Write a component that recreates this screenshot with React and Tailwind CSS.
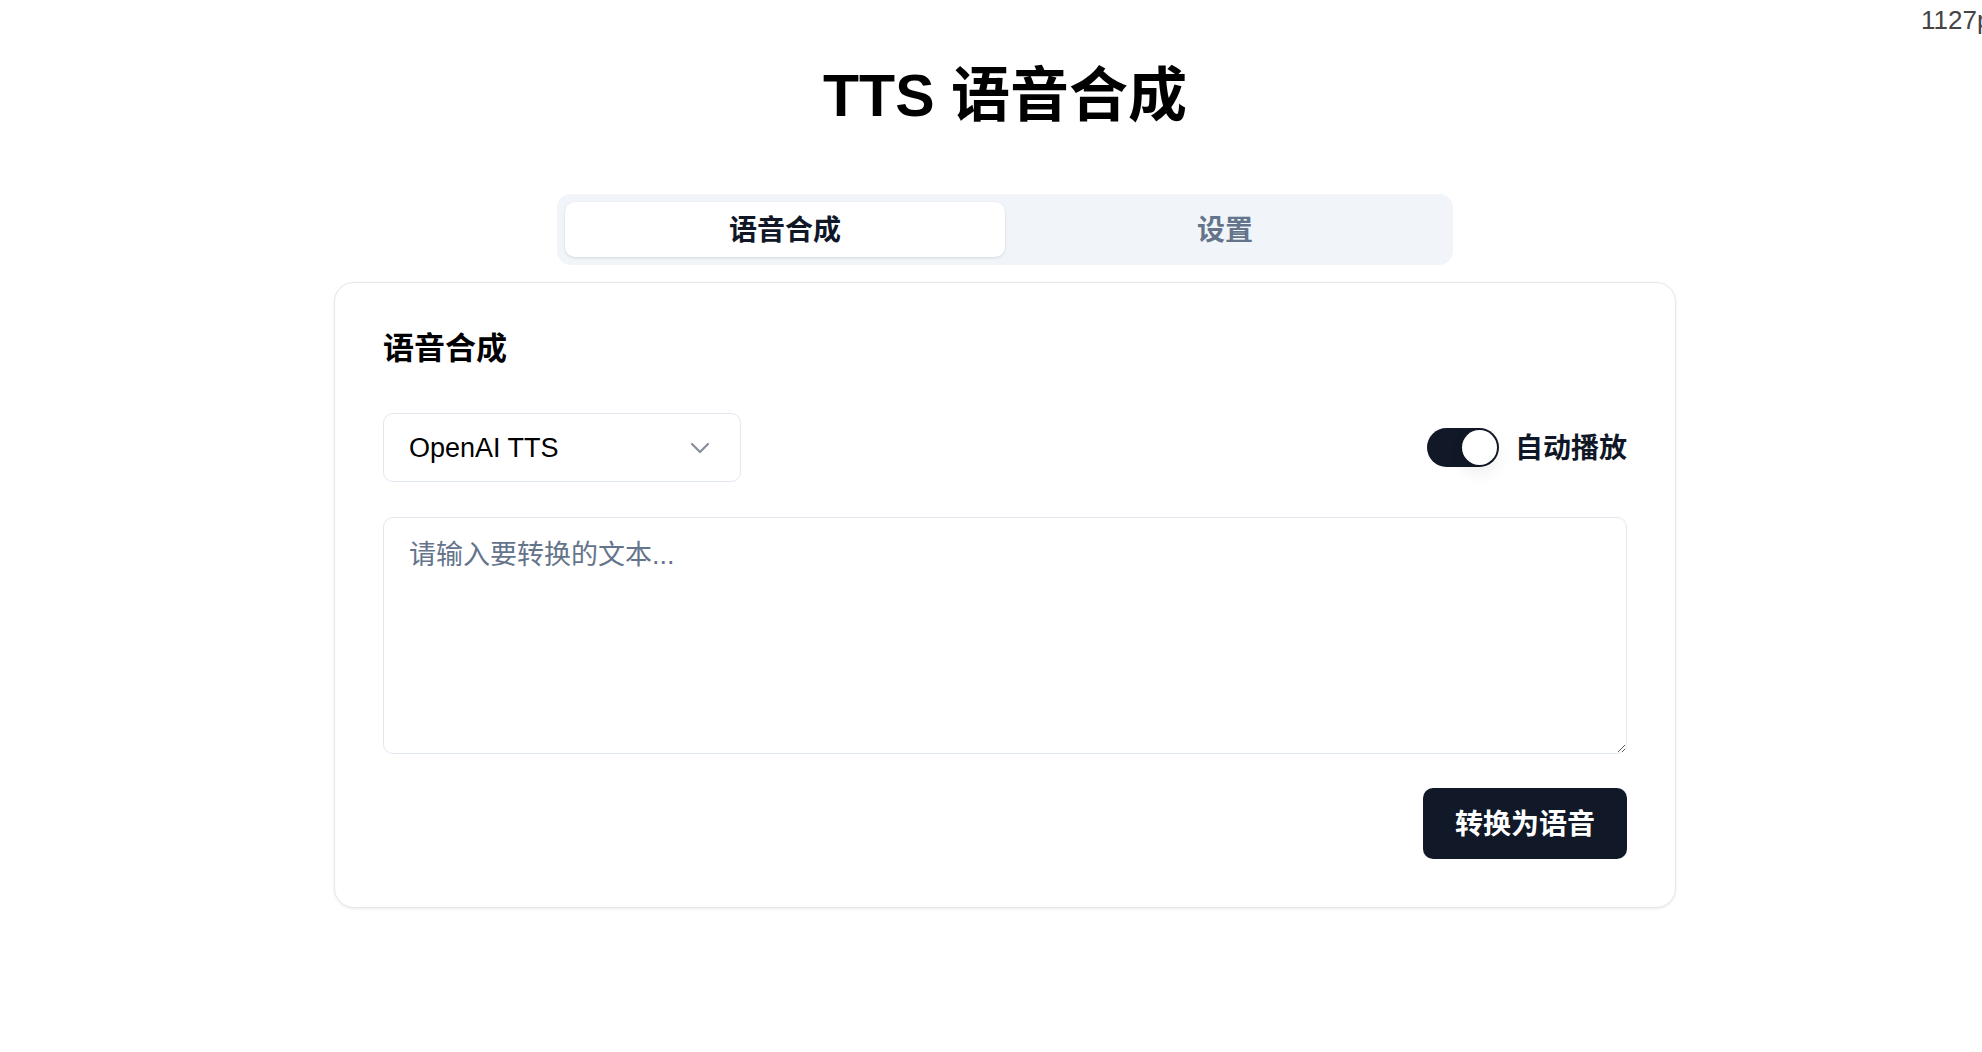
import React, { useState } from "react";
import { ChevronDown } from "lucide-react";

const FONT = { fontFamily: '"Liberation Sans", "Noto Sans CJK SC", Arial, sans-serif' };

export default function App() {
  const [tab, setTab] = useState("tts");
  const [auto, setAuto] = useState(true);
  return (
    <div className="relative w-full min-h-[1052px] overflow-hidden bg-white text-gray-900" style={FONT}>
      <div className="absolute left-[1921px] top-[4px] whitespace-nowrap text-[26px] leading-[32px] text-[#444]">1127px</div>
      <div className="flex flex-col items-center pl-[28px]">
        <h1 className="mt-[66px] h-[60px] text-[59px] leading-[60px] font-bold text-black">TTS 语音合成</h1>
        <div className="mt-[68px] flex w-[896px] h-[71px] p-2 rounded-[14px] bg-[#f1f5f9]">
          <button
            onClick={() => setTab("tts")}
            className={`flex-1 rounded-[10px] pt-[3px] text-[28px] font-semibold ${tab === "tts" ? "bg-white text-gray-900 shadow-[0_1px_3px_rgba(0,0,0,0.12)]" : "text-[#64748b]"}`}
          >
            语音合成
          </button>
          <button
            onClick={() => setTab("settings")}
            className={`flex-1 rounded-[10px] pt-[3px] text-[28px] font-semibold ${tab === "settings" ? "bg-white text-gray-900 shadow-[0_1px_3px_rgba(0,0,0,0.12)]" : "text-[#64748b]"}`}
          >
            设置
          </button>
        </div>
        <div className="mt-[17px] w-[1342px] rounded-[20px] border border-[#e5e7eb] bg-white p-12 shadow-[0_1px_3px_rgba(0,0,0,0.08)]">
          <h2 className="text-[31px] leading-[36px] font-semibold text-black">语音合成</h2>
          <div className="mt-[46px] flex items-center justify-between">
            <div className="flex h-[69px] w-[358px] items-center justify-between rounded-[10px] border border-[#e2e8f0] bg-white pl-[25px] pr-[24px]">
              <span className="pt-[2px] text-[27px] text-black">OpenAI TTS</span>
              <ChevronDown size={32} strokeWidth={1.6} className="text-gray-500 opacity-80" />
            </div>
            <div className="flex items-center gap-[16px]">
              <button
                onClick={() => setAuto(!auto)}
                className={`relative h-[39px] w-[72px] rounded-full border-[2px] border-transparent ${auto ? "bg-[#111827]" : "bg-gray-200"}`}
              >
                <span
                  className={`block h-[35px] w-[35px] rounded-full bg-white shadow-[0_8px_16px_rgba(0,0,0,0.08)] ${auto ? "translate-x-[33px]" : "translate-x-0"}`}
                />
              </button>
              <span className="pt-[2px] text-[28px] font-semibold text-gray-900">自动播放</span>
            </div>
          </div>
          <textarea
            className="mt-[35px] block h-[237px] w-full rounded-[10px] border border-[#e2e8f0] px-[25px] pt-[17px] pb-[15px] text-[27px] leading-[40px] text-gray-900 outline-none placeholder:text-[#64748b]"
            placeholder="请输入要转换的文本..."
            style={FONT}
          />
          <div className="mt-[34px] flex justify-end">
            <button className="h-[71px] w-[204px] rounded-[10px] bg-[#111827] pt-[3px] text-[28px] font-semibold text-white">
              转换为语音
            </button>
          </div>
        </div>
      </div>
    </div>
  );
}
